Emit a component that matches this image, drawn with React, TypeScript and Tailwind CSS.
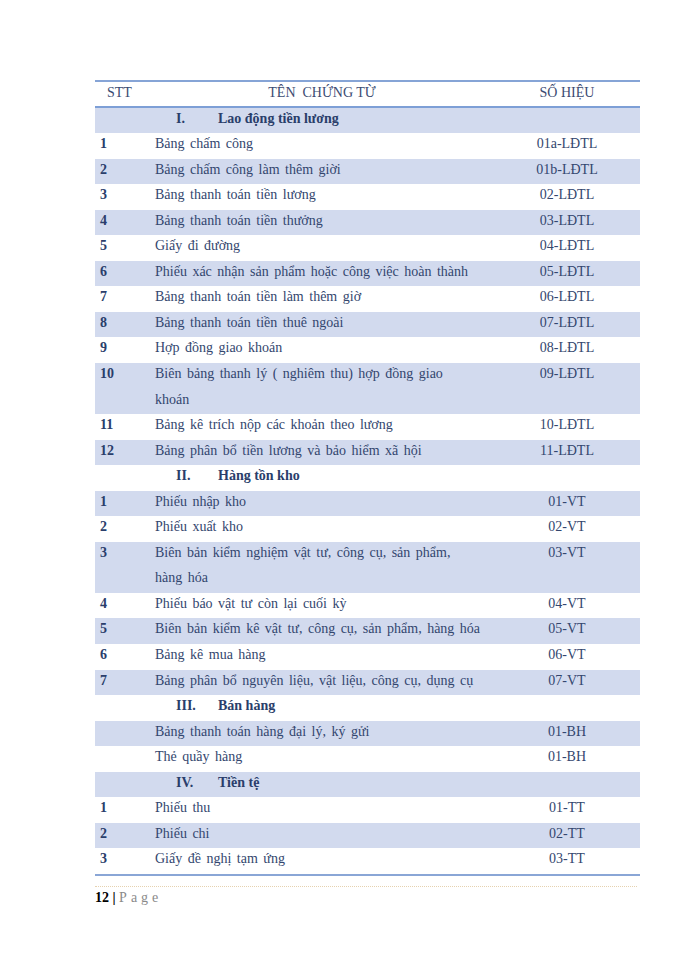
import React from "react";

type Row =
  | { kind: "section"; num: string; title: string }
  | { kind: "item"; stt: string; name: React.ReactNode; code: string; lines?: number };

const rows: Row[] = [
  { kind: "section", num: "I.", title: "Lao động tiền lương" },
  { kind: "item", stt: "1", name: "Bảng chấm công", code: "01a-LĐTL" },
  { kind: "item", stt: "2", name: "Bảng chấm công làm thêm giời", code: "01b-LĐTL" },
  { kind: "item", stt: "3", name: "Bảng thanh toán tiền lương", code: "02-LĐTL" },
  { kind: "item", stt: "4", name: "Bảng thanh toán tiền thưởng", code: "03-LĐTL" },
  { kind: "item", stt: "5", name: "Giấy đi đường", code: "04-LĐTL" },
  { kind: "item", stt: "6", name: "Phiếu xác nhận sản phẩm hoặc công việc hoàn thành", code: "05-LĐTL" },
  { kind: "item", stt: "7", name: "Bảng thanh toán tiền làm thêm giờ", code: "06-LĐTL" },
  { kind: "item", stt: "8", name: "Bảng thanh toán tiền thuê ngoài", code: "07-LĐTL" },
  { kind: "item", stt: "9", name: "Hợp đồng giao khoán", code: "08-LĐTL" },
  {
    kind: "item",
    stt: "10",
    name: (
      <>
        Biên bảng thanh lý ( nghiêm thu) hợp đồng giao
        <br />
        khoán
      </>
    ),
    code: "09-LĐTL",
    lines: 2,
  },
  { kind: "item", stt: "11", name: "Bảng kê trích nộp các khoản theo lương", code: "10-LĐTL" },
  { kind: "item", stt: "12", name: "Bảng phân bổ tiền lương và bảo hiểm xã hội", code: "11-LĐTL" },
  { kind: "section", num: "II.", title: "Hàng tồn kho" },
  { kind: "item", stt: "1", name: "Phiếu nhập kho", code: "01-VT" },
  { kind: "item", stt: "2", name: "Phiếu xuất kho", code: "02-VT" },
  {
    kind: "item",
    stt: "3",
    name: (
      <>
        Biên bản kiểm nghiệm vật tư, công cụ, sản phẩm,
        <br />
        hàng hóa
      </>
    ),
    code: "03-VT",
    lines: 2,
  },
  { kind: "item", stt: "4", name: "Phiếu báo vật tư còn lại cuối kỳ", code: "04-VT" },
  { kind: "item", stt: "5", name: "Biên bản kiểm kê vật tư, công cụ, sản phẩm, hàng hóa", code: "05-VT" },
  { kind: "item", stt: "6", name: "Bảng kê mua hàng", code: "06-VT" },
  { kind: "item", stt: "7", name: "Bảng phân bổ nguyên liệu, vật liệu, công cụ, dụng cụ", code: "07-VT" },
  { kind: "section", num: "III.", title: "Bán hàng" },
  { kind: "item", stt: "", name: "Bảng thanh toán hàng đại lý, ký gửi", code: "01-BH" },
  { kind: "item", stt: "", name: "Thẻ quầy hàng", code: "01-BH" },
  { kind: "section", num: "IV.", title: "Tiền tệ" },
  { kind: "item", stt: "1", name: "Phiếu thu", code: "01-TT" },
  { kind: "item", stt: "2", name: "Phiếu chi", code: "02-TT" },
  { kind: "item", stt: "3", name: "Giấy đề nghị tạm ứng", code: "03-TT" },
];

export default function App() {
  return (
    <div
      className="w-[700px] h-[960px] bg-white text-[#33466e]"
      style={{ fontFamily: '"Liberation Serif", "Times New Roman", serif' }}
    >
      <div className="pt-[80px] pl-[95px] w-[640px]">
        <div className="border-t-2 border-[#86a4d6]">
          {/* header */}
          <div className="grid grid-cols-[55px_344px_146px] h-[25.5px] leading-[22px] text-[14px] text-[#3b4b72] border-b-2 border-[#7d9fd6]">
            <div className="pl-[12px]">STT</div>
            <div className="text-center">TÊN&nbsp; CHỨNG TỪ</div>
            <div className="text-center">SỐ HIỆU</div>
          </div>
          {rows.map((r, i) => {
            const shaded = i % 2 === 0;
            const bg = shaded ? "bg-[#d2daee]" : "bg-white";
            if (r.kind === "section") {
              return (
                <div key={i} className={`${bg} h-[25.55px] text-[14px] font-bold text-[#2a3e6b]`}>
                  <div className="flex leading-[25.55px] -translate-y-[2px]">
                    <div className="w-[81px]" />
                    <div className="w-[42px]">{r.num}</div>
                    <div>{r.title}</div>
                  </div>
                </div>
              );
            }
            const lines = r.lines ?? 1;
            return (
              <div key={i} className={`${bg} text-[14px] ${lines === 2 ? "h-[51.1px]" : "h-[25.55px]"}`}>
                <div className="grid grid-cols-[55px_344px_146px] leading-[25.55px] -translate-y-[2px]">
                  <div className="pl-[5px] font-bold text-[#2a3e6b]">{r.stt}</div>
                  <div className="pl-[5px] whitespace-nowrap [word-spacing:2px]">{r.name}</div>
                  <div className="text-center">{r.code}</div>
                </div>
              </div>
            );
          })}
        </div>
        <div className="h-[2px] bg-[#8aa6d6]" />
        <div className="mt-[10px] border-t border-dotted border-[#e6d2b0] w-[542px]" />
        <div className="mt-[2px] text-[14px] leading-[18px]">
          <span className="font-bold text-black">12 | </span>
          <span className="text-[#8a8a8a] tracking-[4px]">Page</span>
        </div>
      </div>
    </div>
  );
}
